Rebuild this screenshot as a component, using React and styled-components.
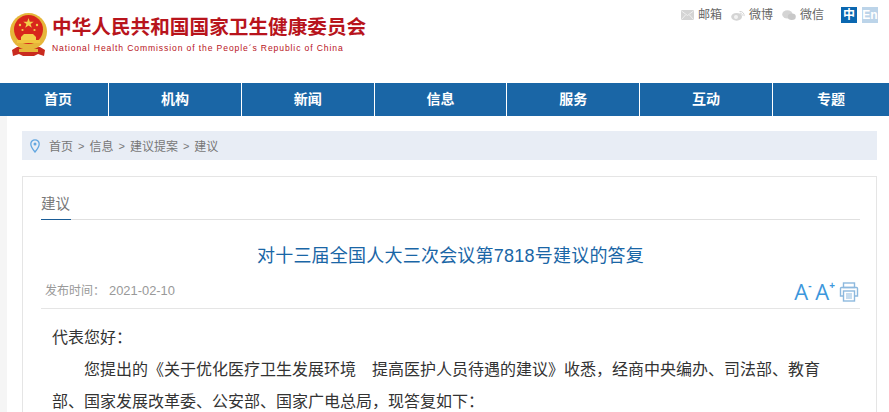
import React from 'react';
import styled, { createGlobalStyle } from 'styled-components';

const Global = createGlobalStyle`
  html, body { margin: 0; padding: 0; background: #fff; overflow: hidden; }
  body { font-family: "Liberation Sans", "Noto Sans CJK SC", sans-serif; }
`;

const Page = styled.div`
  width: 889px;
  height: 412px;
  overflow: hidden;
`;

const Header = styled.header`
  height: 83px;
  display: flex;
  justify-content: space-between;
  align-items: flex-start;
`;

const Brand = styled.div`
  display: flex;
  align-items: flex-start;
  gap: 3px;
  padding: 13px 0 0 8px;
`;

const BrandText = styled.div`
  display: flex;
  flex-direction: column;
  color: #b8141c;
`;

const BrandCn = styled.div`
  font-size: 19.65px;
  line-height: 24px;
  font-weight: 700;
  white-space: nowrap;
  margin-top: 2px;
`;

const BrandEn = styled.div`
  font-size: 8.6px;
  line-height: 12px;
  letter-spacing: 0.88px;
  white-space: nowrap;
  margin-top: 3px;
`;

const Tools = styled.div`
  display: flex;
  align-items: center;
  padding: 7px 11px 0 0;
  font-size: 12px;
  color: #666;
`;

const ToolLink = styled.span`
  display: flex;
  align-items: center;
  gap: 4px;
  margin-right: 9px;
  line-height: 16px;
`;

const Lang = styled.span`
  width: 16px;
  height: 16px;
  line-height: 16px;
  text-align: center;
  font-size: 12px;
  font-weight: 700;
  color: #fff;
  background: ${p => (p.$active ? '#0a67b0' : '#bcd4e9')};
  margin-left: ${p => (p.$active ? '8px' : '5px')};
`;

const Nav = styled.nav`
  height: 33px;
  background: #1a66a6;
  display: grid;
  grid-template-columns: 109px repeat(5, 132.8px) 116px;
`;

const NavItem = styled.div`
  display: flex;
  align-items: center;
  justify-content: center;
  color: #fff;
  font-size: 14px;
  font-weight: 700;
  padding-bottom: 3px;
  padding-left: ${p => (p.$first ? '8px' : '0')};
  border-right: ${p => (p.$last ? 'none' : '1px solid #fff')};
`;

const Body = styled.div`
  padding: 15px 12px 0 22px;
  position: relative;
  height: 296px;
  box-sizing: border-box;
`;

const SideStrip = styled.div`
  position: absolute;
  left: 0;
  top: 0;
  bottom: 0;
  width: 7px;
  background: #f5f5f5;
`;

const Crumbs = styled.div`
  height: 29px;
  background: #e8edf5;
  display: flex;
  align-items: center;
  padding-left: 8px;
  font-size: 12px;
  color: #777;
`;

const CrumbList = styled.div`
  display: flex;
  align-items: center;
  margin-left: 9px;
`;

const CrumbSep = styled.span`
  margin: 0 5px;
  font-size: 11px;
`;

const Card = styled.section`
  margin-top: 16px;
  border: 1px solid #e5e5e5;
  border-bottom: none;
  height: 260px;
  padding: 0 16px 0 18px;
`;

const TabBar = styled.div`
  height: 42px;
  border-bottom: 1px solid #e0e0e0;
  display: flex;
  align-items: flex-end;
`;

const Tab = styled.div`
  font-size: 14.5px;
  line-height: 30px;
  color: #777;
  width: 30px;
  border-bottom: 1px solid #1a5c96;
  margin-bottom: -1px;
  white-space: nowrap;
`;

const Title = styled.h1`
  margin: 24px 0 0;
  font-size: 18px;
  line-height: 24px;
  font-weight: 400;
  letter-spacing: 0.22px;
  color: #1a66a6;
  text-align: center;
`;

const Meta = styled.div`
  height: 30px;
  margin-top: 10px;
  border-bottom: 1px solid #e5e5e5;
  display: flex;
  justify-content: space-between;
  align-items: flex-start;
  font-size: 12px;
  color: #999;
  padding-left: 4px;
`;

const MetaDate = styled.span`
  font-size: 12.9px;
  margin-left: 4px;
`;

const MetaText = styled.div`
  line-height: 20px;
  margin-top: 3px;
`;

const MetaTools = styled.div`
  display: flex;
  align-items: flex-end;
  gap: 4px;
  margin-top: 2px;
  margin-right: 1px;
`;

const SizeBtn = styled.span`
  font-family: "Open Sans", sans-serif;
  font-weight: 400;
  font-size: 22px;
  line-height: 22px;
  color: #3d97dc;
  display: inline-flex;
  align-items: flex-start;
`;

const SizeMark = styled.sup`
  font-size: 10px;
  line-height: 10px;
  font-weight: 700;
`;

const Article = styled.div`
  font-size: 16px;
  line-height: 32px;
  color: #333;
  padding: 13px 0 0 11px;
  margin-right: 22px;
`;

const Para = styled.p`
  margin: 0;
  text-indent: ${p => (p.$indent ? '32px' : '0')};
`;

const Emblem = () => (
  <svg width="41" height="44" viewBox="0 0 41 44">
    <path d="M9 34l-5 3 1 6 6-2 4 2h11l4-2 6 2 1-6-5-3z" fill="#c92b1f" />
    <circle cx="20.500" cy="18.500" r="18.500" fill="#e6b63a" />
    <circle cx="20.500" cy="16.500" r="14.500" fill="#d8261c" />
    <path d="M20.500 5l1.300 3.700h3.900l-3.100 2.300 1.200 3.700-3.300-2.300-3.300 2.300 1.200-3.700-3.100-2.300h3.900z" fill="#f2cf4a" />
    <circle cx="12" cy="12" r="1.200" fill="#f2cf4a" />
    <circle cx="29" cy="12" r="1.200" fill="#f2cf4a" />
    <circle cx="14.500" cy="17" r="1.100" fill="#f2cf4a" />
    <circle cx="26.500" cy="17" r="1.100" fill="#f2cf4a" />
    <path d="M13 24l3-3h9l3 3v3H13z" fill="#f2cf4a" />
    <rect x="9" y="27" width="23" height="3" fill="#f0c63f" />
    <path d="M11 36h19v3H11z" fill="#e6b63a" />
  </svg>
);

const MailIcon = () => (
  <svg width="13" height="10" viewBox="0 0 13 10">
    <rect width="13" height="10" rx="1" fill="#d4d4d4" />
    <path d="M0.500 1l6 4.500 6-4.500M0.500 9.500l4-4.500M12.500 9.500l-4-4.500" fill="none" stroke="#f2f2f2" strokeWidth="0.9" />
  </svg>
);

const WeiboIcon = () => (
  <svg width="14" height="11" viewBox="0 0 14 11">
    <ellipse cx="5.600" cy="6.800" rx="5.400" ry="3.900" fill="#d4d4d4" />
    <circle cx="5" cy="7" r="2" fill="#f2f2f2" />
    <path d="M8.500 1.500a4 4 0 0 1 4.600 4.600M8.800 3.300a2 2 0 0 1 2.400 2.400" fill="none" stroke="#d4d4d4" strokeWidth="1" />
  </svg>
);

const WechatIcon = () => (
  <svg width="14" height="11" viewBox="0 0 14 11">
    <ellipse cx="5.400" cy="4.400" rx="5.200" ry="4.200" fill="#d4d4d4" />
    <ellipse cx="9.800" cy="6.800" rx="4" ry="3.200" fill="#c8c8c8" />
  </svg>
);

const PinIcon = () => (
  <svg width="10" height="14" viewBox="0 0 10 14">
    <path d="M5 .8C2.600.8.800 2.600.800 5c0 3 4.200 8 4.200 8s4.200-5 4.200-8C9.200 2.600 7.400.8 5 .8z" fill="none" stroke="#63a7e0" strokeWidth="1.300" />
    <circle cx="5" cy="5" r="1.500" fill="#63a7e0" />
  </svg>
);

const PrintIcon = () => (
  <svg width="20" height="20" viewBox="0 0 20 20" fill="none" stroke="#8db9de" strokeWidth="1.400">
    <rect x="4.500" y="1" width="11" height="4.500" />
    <path d="M4 14H1.500V6.500a1 1 0 0 1 1-1h15a1 1 0 0 1 1 1V14H16" />
    <rect x="4.500" y="9" width="11" height="10" />
    <path d="M7 12h6M7 14h6M7 16h6" strokeWidth="1" />
  </svg>
);

const navItems = ['首页', '机构', '新闻', '信息', '服务', '互动', '专题'];
const crumbs = ['首页', '信息', '建议提案', '建议'];

export default function App() {
  return (
    <Page>
      <Global />
      <Header>
        <Brand>
          <Emblem />
          <BrandText>
            <BrandCn>中华人民共和国国家卫生健康委员会</BrandCn>
            <BrandEn>National Health Commission of the People´s Republic of China</BrandEn>
          </BrandText>
        </Brand>
        <Tools>
          <ToolLink><MailIcon />邮箱</ToolLink>
          <ToolLink><WeiboIcon />微博</ToolLink>
          <ToolLink><WechatIcon />微信</ToolLink>
          <Lang $active>中</Lang>
          <Lang>En</Lang>
        </Tools>
      </Header>
      <Nav>
        {navItems.map((item, i) => (
          <NavItem key={item} $first={i === 0} $last={i === navItems.length - 1}>{item}</NavItem>
        ))}
      </Nav>
      <Body>
        <SideStrip />
        <Crumbs>
          <PinIcon />
          <CrumbList>
            {crumbs.map((c, i) => (
              <React.Fragment key={c}>
                {i > 0 && <CrumbSep>&gt;</CrumbSep>}
                <span>{c}</span>
              </React.Fragment>
            ))}
          </CrumbList>
        </Crumbs>
        <Card>
          <TabBar>
            <Tab>建议</Tab>
          </TabBar>
          <Title>对十三届全国人大三次会议第7818号建议的答复</Title>
          <Meta>
            <MetaText>发布时间：<MetaDate>2021-02-10</MetaDate></MetaText>
            <MetaTools>
              <SizeBtn>A<SizeMark>-</SizeMark></SizeBtn>
              <SizeBtn>A<SizeMark>+</SizeMark></SizeBtn>
              <PrintIcon />
            </MetaTools>
          </Meta>
          <Article>
            <Para>代表您好：</Para>
            <Para $indent>您提出的《关于优化医疗卫生发展环境　提高医护人员待遇的建议》收悉，经商中央编办、司法部、教育部、国家发展改革委、公安部、国家广电总局，现答复如下：</Para>
          </Article>
        </Card>
      </Body>
    </Page>
  );
}
